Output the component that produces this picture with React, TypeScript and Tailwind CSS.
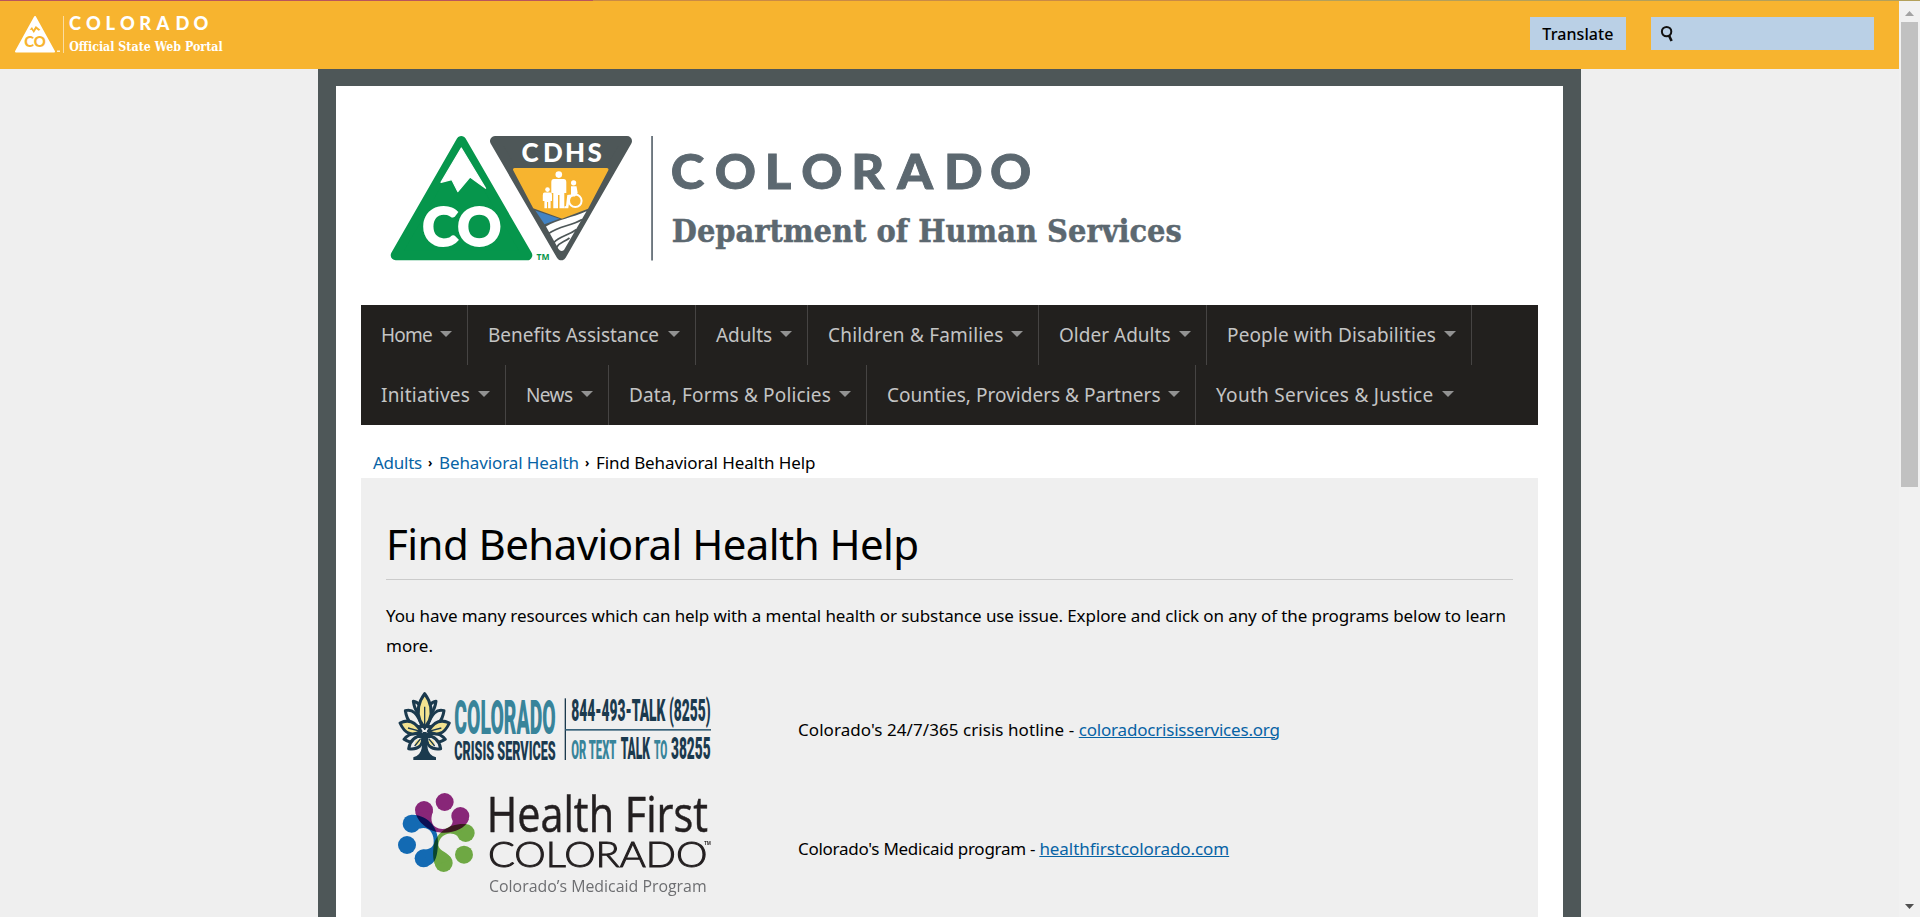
type NavItem = { label: string; box: string };

const navRows: NavItem[][] = [
  [
    { label: "Home", box: "w-[107px] tracking-[-0.764px]" },
    { label: "Benefits Assistance", box: "w-[228px] tracking-[-0.016px]" },
    { label: "Adults", box: "w-[112px] tracking-[-0.072px]" },
    { label: "Children & Families", box: "w-[231px] tracking-[0.2px]" },
    { label: "Older Adults", box: "w-[168px] tracking-[0.012px]" },
    { label: "People with Disabilities", box: "w-[265px] tracking-[0.132px]" },
  ],
  [
    { label: "Initiatives", box: "w-[145px] tracking-[0.206px]" },
    { label: "News", box: "w-[103px] tracking-[-0.578px]" },
    { label: "Data, Forms & Policies", box: "w-[258px] tracking-[0.156px]" },
    { label: "Counties, Providers & Partners", box: "w-[329px] tracking-[0.03px]" },
    { label: "Youth Services & Justice", box: "w-[274px] border-r-transparent tracking-[0.292px]" },
  ],
];

function PortalLogo() {
  return (
    <svg className="h-[45px] w-[230px] overflow-visible" viewBox="10 11 230 45" role="img" aria-label="Colorado Official State Web Portal">
      <path d="M35 17 L54 51.5 H16 Z" fill="#fff" stroke="#fff" strokeWidth="2" strokeLinejoin="round" />
      <path d="M29.6 29.8 L32 27 L33.4 29.8 L35.8 26 L40.4 29.8 L38.6 30.8 L36.3 28.9 L33.8 33 L31.6 29.7 Z" fill="#f7b42f" />
      <text x="24.3" y="47.3" fontFamily="Lato" fontWeight="900" fontSize="14.5" fill="#f7b42f" textLength="21.6" lengthAdjust="spacingAndGlyphs">CO</text>
      <rect x="57" y="50.5" width="3" height="1.5" fill="#fff" opacity=".8" />
      <rect x="63" y="16" width="1" height="37" fill="#fff" opacity=".55" />
      <text y="30" x="69 86 105.5 120 139.3 156.5 175.5 193.5" fontFamily="Lato" fontWeight="900" fontSize="18.3" fill="#fff">COLORADO</text>
      <text x="69.2" y="50.6" fontFamily="DejaVu Serif" fontWeight="700" fontSize="12.8" fill="#fff" textLength="153.5" lengthAdjust="spacingAndGlyphs">Official State Web Portal</text>
    </svg>
  );
}

function DepartmentLogo() {
  return (
    <svg className="block h-[150px] w-[820px] overflow-visible" viewBox="380 125 820 150" role="img" aria-label="Colorado Department of Human Services">
      <path d="M461.3 141 L527.3 255.3 H395.7 Z" fill="#06964c" stroke="#06964c" strokeWidth="10" strokeLinejoin="round" />
      <path d="M461.3 148 L485.6 188.3 L470 177 L457.8 191.6 L451.7 179.6 L441 182.4 Z" fill="#fff" stroke="#fff" strokeWidth="1.2" strokeLinejoin="round" />
      <text x="422.3" y="245.6" fontFamily="Lato" fontWeight="900" fontSize="53" fill="#fff" stroke="#fff" strokeWidth="1.8" textLength="79" lengthAdjust="spacingAndGlyphs">CO</text>
      <text x="536.5" y="260" fontFamily="Open Sans" fontWeight="700" fontSize="8.6" fill="#06964c" textLength="13" lengthAdjust="spacingAndGlyphs">TM</text>

      <path d="M495 141 H627 L561.3 255.3 Z" fill="#4e5758" stroke="#4e5758" strokeWidth="10" strokeLinejoin="round" />
      <text y="162.3" x="521.5 543 565 587.5" fontFamily="Lato" fontWeight="900" fontSize="26" fill="#fff">CDHS</text>
      <path d="M514.5 169.5 H607 L587 207.5 L562 217 L534.3 207 Z" fill="#f7b42f" stroke="#f7b42f" strokeWidth="3" strokeLinejoin="round" />
      <path d="M535.3 210.5 L559.5 218.8 L544.5 224.3 Z" fill="#4283c4" />
      <path d="M546 226.5 C558 219 572 218 586.5 211.2 L564 250 Q561 252.5 558.5 249 Z" fill="#fff" />
      <path d="M548.5 233.6 C560 225.5 570 226.5 582 219.5 M553.5 243 C560 235.5 567 236.5 576.5 229.5 M556.5 247.5 C560 241.5 564 242.5 569.5 238" fill="none" stroke="#4e5758" strokeWidth="1.7" />
      <g fill="#fff">
        <circle cx="558.8" cy="174.6" r="3.3" />
        <path d="M554 179 H563.6 Q566.3 179 566.3 182 V193 H564.3 V208.3 H559.5 V195 H558 V208.3 H553.3 V193 H551.3 V182 Q551.3 179 554 179 Z" />
        <circle cx="547.5" cy="189.6" r="2.3" />
        <path d="M544.6 192.6 H550.4 Q552 192.6 552 195 V201 H550.6 V208.3 H548.1 V202 H547 V208.3 H544.4 V201 H542.8 V195 Q542.8 192.6 544.6 192.6 Z" />
        <circle cx="573.6" cy="182.8" r="2.6" />
        <path d="M571 186.3 H576.5 L577.7 193 L575 196.5 H570 L568.3 208.3 H564.3 V206.5 L566 206 L567.3 195 L571 194.5 Z" />
      </g>
      <circle cx="575.3" cy="200.8" r="6.3" fill="none" stroke="#fff" strokeWidth="2" />

      <rect x="651.2" y="136" width="1.7" height="124.5" fill="#5c6870" />
      <g fill="#5c6870">
        <text
          transform="translate(670 189.2) scale(1.06 1)"
          x="0.7 42.3 89.3 123.8 171 214.3 258.5 302"
          y="0"
          fontFamily="Lato"
          fontWeight="900"
          fontSize="48"
          stroke="#5c6870"
          strokeWidth="0.9"
        >
          COLORADO
        </text>
        <text x="671.8" y="242" fontFamily="DejaVu Serif" fontWeight="700" fontSize="32" stroke="#5c6870" strokeWidth="0.5" textLength="510" lengthAdjust="spacingAndGlyphs">Department of Human Services</text>
      </g>
    </svg>
  );
}

function CrisisLogo() {
  return (
    <svg className="h-[110px] w-[350px] overflow-visible" viewBox="0 0 1050 330" role="img" aria-label="Colorado Crisis Services">
      <g stroke="#1b3a4e" strokeWidth="9" strokeLinejoin="round">
        <path d="M100 94 Q122 96 128 134 Q106 134 100 94 Z M168 94 Q146 96 140 134 Q162 134 168 94 Z" fill="#efefef" />
        <path d="M76 122 Q108 112 126 170 Q84 172 76 122 Z M192 122 Q160 112 142 170 Q184 172 192 122 Z" fill="#efefef" />
        <path d="M72 208 Q92 182 128 194 Q112 232 72 208 Z M196 208 Q176 182 140 194 Q156 232 196 208 Z" fill="#efefef" />
        <path d="M134 71 Q164 112 148 152 L134 174 L120 152 Q104 112 134 71 Z" fill="#f3e391" />
        <path d="M60 159 Q98 140 123 184 Q82 208 60 159 Z M208 159 Q170 140 145 184 Q186 208 208 159 Z" fill="#f3e391" />
        <path d="M86 236 Q92 200 128 196 Q130 242 86 236 Z M182 236 Q176 200 140 196 Q138 242 182 236 Z" fill="#efefef" />
      </g>
      <path d="M105 227 Q100 210 122 206 Q124 228 105 227 Z M163 227 Q168 210 146 206 Q144 228 163 227 Z" fill="#f3e391" />
      <path d="M134 110 V180 M84 174 L122 184 M184 174 L146 184 M104 228 L122 206 M164 228 L146 206" stroke="#1b3a4e" strokeWidth="4" />
      <path d="M128 186 H140 L143 235 Q146 256 168 262 V270 H100 V262 Q122 256 125 235 Z" fill="#1b3a4e" />
      <g fontFamily="Roboto" fontWeight="900">
        <text transform="translate(223 191) scale(1 1.9)" fontSize="77" fill="#38849a" textLength="304" lengthAdjust="spacingAndGlyphs">COLORADO</text>
        <text transform="translate(223 269) scale(1 1.8)" fontSize="44" fill="#1b3a4e" textLength="304" lengthAdjust="spacingAndGlyphs">CRISIS SERVICES</text>
        <text transform="translate(574 152) scale(1 1.8)" fontSize="52" fill="#1b3a4e" textLength="418" lengthAdjust="spacingAndGlyphs">844-493-TALK (8255)</text>
        <text transform="translate(574 268) scale(1 1.7)" fontSize="45" fill="#38849a" textLength="135" lengthAdjust="spacingAndGlyphs">OR TEXT</text>
        <text transform="translate(722 268) scale(1 1.8)" fontSize="52" fill="#1b3a4e" textLength="88" lengthAdjust="spacingAndGlyphs">TALK</text>
        <text transform="translate(822 268) scale(1 1.7)" fontSize="45" fill="#38849a" textLength="40" lengthAdjust="spacingAndGlyphs">TO</text>
        <text transform="translate(873 268) scale(1 1.8)" fontSize="52" fill="#1b3a4e" textLength="119" lengthAdjust="spacingAndGlyphs">38255</text>
      </g>
      <rect x="554" y="85" width="4" height="185" fill="#1b3a4e" />
      <rect x="556" y="177" width="437" height="5" fill="#38627a" />
    </svg>
  );
}

function HealthFirstLogo() {
  return (
    <svg className="isolate h-[137px] w-[350px] overflow-visible" viewBox="0 0 1050 411" role="img" aria-label="Health First Colorado">
      <g className="mix-blend-multiply" fill="#882678">
        <circle cx="194" cy="66" r="27" />
        <circle cx="132" cy="90" r="27" />
        <circle cx="241" cy="108" r="27" />
        <path d="M106 98 C116 132 152 158 192 158 C226 158 256 145 267 118 L215 112 C224 130 212 147 187 147 C156 146 148 122 159 94 Z" />
      </g>
      <g className="mix-blend-multiply" fill="#136ab3">
        <circle cx="95" cy="131" r="27" />
        <circle cx="131" cy="235" r="27" />
        <path d="M97 104 C148 106 176 146 174 190 C173 226 166 250 150 254 L122 210 C146 209 158 205 161 190 C163 160 148 138 118 146 Z" />
      </g>
      <circle cx="81" cy="195" r="27" fill="#136ab3" />
      <g className="mix-blend-multiply" fill="#6ea843">
        <circle cx="191" cy="249" r="27" />
        <circle cx="257" cy="159" r="27" />
        <path d="M260 132 C206 128 163 160 160 206 C158 228 160 244 166 256 L215 238 C208 218 178 215 175 196 C177 168 206 150 232 168 Z" />
      </g>
      <circle cx="252" cy="224" r="27" fill="#6ea843" />
      <text x="320" y="157" fontFamily="Open Sans" fontWeight="500" fontSize="147" fill="#231f20" stroke="#231f20" strokeWidth="1.5" textLength="664" lengthAdjust="spacingAndGlyphs">Health First</text>
      <text x="324" y="262" fontFamily="Lato" fontWeight="300" fontSize="104" fill="#231f20" stroke="#231f20" strokeWidth="3" textLength="658" lengthAdjust="spacingAndGlyphs">COLORADO</text>
      <text x="973" y="194" fontFamily="Open Sans" fontWeight="700" fontSize="13" fill="#231f20" textLength="20" lengthAdjust="spacingAndGlyphs">TM</text>
      <text x="327" y="335" fontFamily="Open Sans" fontSize="47" fill="#6d6e71" textLength="653" lengthAdjust="spacingAndGlyphs">Colorado’s Medicaid Program</text>
    </svg>
  );
}

function Header() {
  return (
    <header className="flex h-[68px] items-start bg-[#f7b42f]">
      <div className="pt-[10px] pl-[10px]">
        <PortalLogo />
      </div>
      <div className="ml-auto flex gap-[25px] pt-4 pr-[25px]">
        <button className="h-[33px] w-24 bg-[#bad0e6] pt-px text-base leading-[32px] font-medium tracking-[0.1px] text-black">
          Translate
        </button>
        <div className="flex h-[33px] w-[223px] items-center bg-[#bad0e6] pl-[9px]">
          <svg className="h-[18px] w-4" viewBox="0 0 16 18" fill="none" stroke="#111">
            <circle cx="6.6" cy="6.6" r="4.7" strokeWidth="2" />
            <path d="M9.2 11 L11.6 16" strokeWidth="2.6" />
          </svg>
        </div>
      </div>
    </header>
  );
}

function Navigation() {
  return (
    <nav className="bg-[#22201e]">
      {navRows.map((row, index) => (
        <ul key={index} className="flex h-[60px]">
          {row.map((item) => (
            <li
              key={item.label}
              className={`${item.box} flex shrink-0 items-center justify-between border-r border-[#464443] pr-[15px] pl-5 text-[19px] whitespace-nowrap text-[#c4c4c4]`}
            >
              {item.label}
              <svg className="-mt-[3px] h-1.5 w-3" viewBox="0 0 12 6">
                <path d="M0 0 H12 L6 6 Z" fill="#929292" />
              </svg>
            </li>
          ))}
        </ul>
      ))}
    </nav>
  );
}

function Breadcrumb() {
  return (
    <div className="flex h-[53px] items-center pt-[23px] pl-3 text-[17px] leading-[30px] whitespace-nowrap">
      <a className="w-[55px] tracking-[-0.248px] text-[#0763a5]">Adults</a>
      <span className="w-[11px] text-xs font-bold">›</span>
      <a className="w-[146px] tracking-[-0.104px] text-[#0763a5]">Behavioral Health</a>
      <span className="w-[11px] text-xs font-bold">›</span>
      <span className="tracking-[-0.09px]">Find Behavioral Health Help</span>
    </div>
  );
}

function Content() {
  return (
    <main className="h-[600px] bg-[#efefef] px-[25px] pt-[40px] text-[17px] leading-[30px]">
      <h1 className="h-[62px] border-b border-[#cbcbcb] text-[42px] leading-[52px] tracking-[-0.57px]">
        Find Behavioral Health Help
      </h1>
      <p className="pt-[21px] whitespace-nowrap">
        <span className="tracking-[-0.095px]">
          You have many resources which can help with a mental health or substance use issue. Explore and click on any of the programs below to learn
        </span>
        <br />
        more.
      </p>
      <div className="mt-[9px] -ml-[6px] flex flex-col">
        <div className="flex h-[110px] items-center">
          <CrisisLogo />
          <p className="pt-[9px] pl-[68px] whitespace-nowrap">
            <span className="tracking-[0.06px]">Colorado's 24/7/365 crisis hotline - </span>
            <a className="tracking-[-0.197px] text-[#0763a5] underline">coloradocrisisservices.org</a>
          </p>
        </div>
        <div className="flex h-[137px] items-center">
          <HealthFirstLogo />
          <p className="pl-[68px] whitespace-nowrap">
            <span className="tracking-[-0.27px]">Colorado's Medicaid program - </span>
            <a className="tracking-[-0.06px] text-[#0763a5] underline">healthfirstcolorado.com</a>
          </p>
        </div>
      </div>
    </main>
  );
}

function Scrollbar() {
  return (
    <aside className="flex w-[21px] shrink-0 flex-col items-center bg-[#f1f1f1]">
      <div className="flex h-[21px] items-center pt-1">
        <svg className="h-[5px] w-[9px]" viewBox="0 0 9 5">
          <path d="M0 5 L4.5 0 L9 5 Z" fill="#a3a3a3" />
        </svg>
      </div>
      <div className="h-[465px] w-[17px] bg-[#c1c1c1]" />
      <svg className="mt-auto mb-2 h-[5px] w-[9px]" viewBox="0 0 9 5">
        <path d="M0 0 H9 L4.5 5 Z" fill="#505050" />
      </svg>
    </aside>
  );
}

export default function App() {
  return (
    <div className="flex h-[917px] flex-col overflow-hidden bg-[#efefef] font-['Noto_Sans',sans-serif] text-black">
      <div className="flex h-px shrink-0">
        <div className="w-[593px] bg-[#b8565c]" />
        <div className="w-[707px] bg-[#c98a45]" />
        <div className="flex-1 bg-[#b3a05a]" />
      </div>
      <div className="flex min-h-0 flex-1">
        <div className="min-w-0 flex-1 overflow-hidden">
          <Header />
          <div className="ml-[318px] w-[1263px] border-x-[18px] border-t-[17px] border-[#4e5758] bg-white px-[25px]">
            <div className="h-[219px] pt-[39px] pl-[19px]">
              <DepartmentLogo />
            </div>
            <Navigation />
            <Breadcrumb />
            <Content />
          </div>
        </div>
        <Scrollbar />
      </div>
    </div>
  );
}
